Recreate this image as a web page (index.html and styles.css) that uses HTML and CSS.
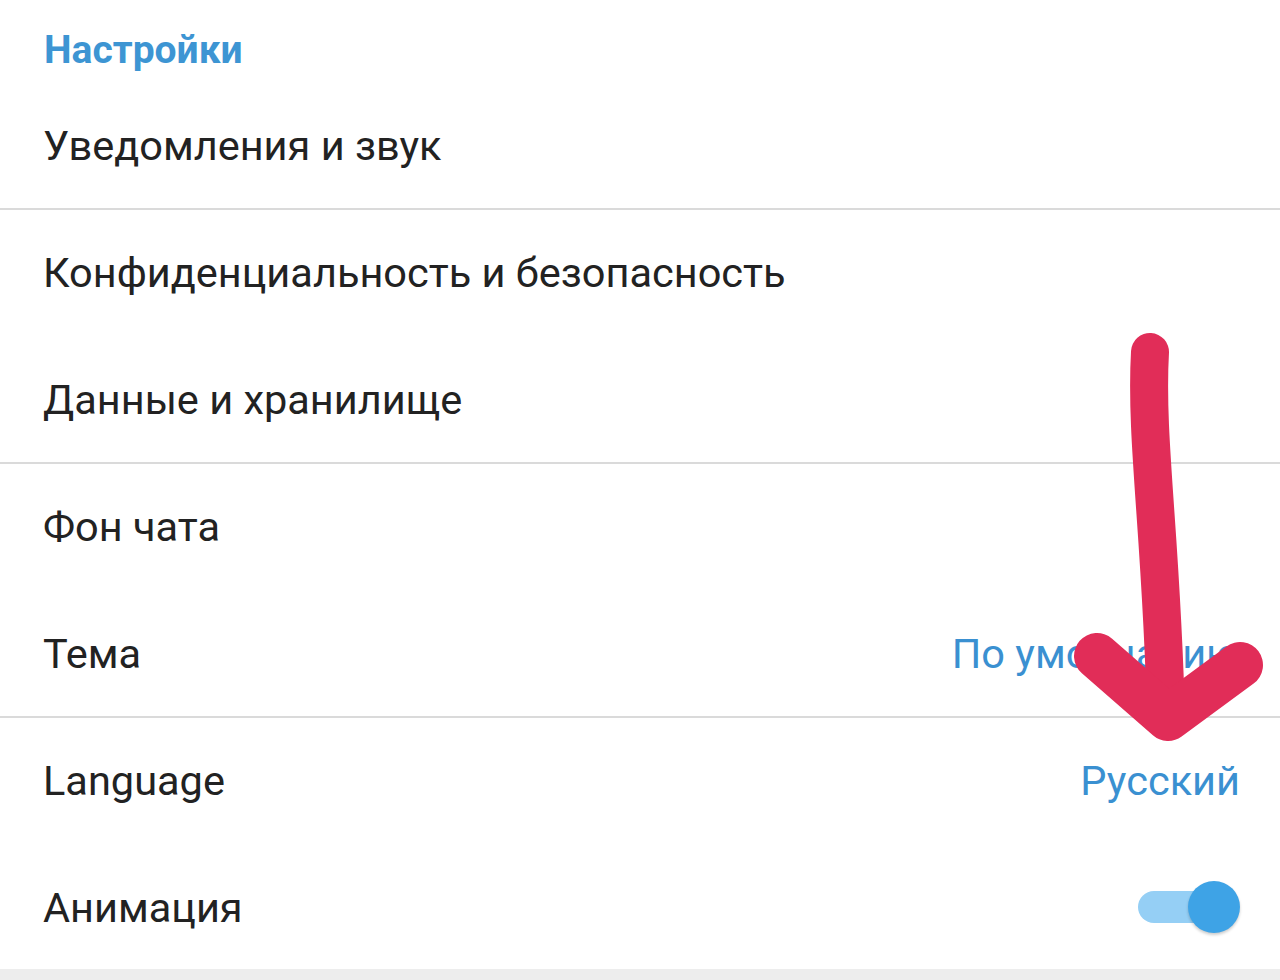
FILE: index.html
```html
<!DOCTYPE html>
<html lang="ru">
<head>
  <meta charset="UTF-8" />
  <meta name="viewport" content="width=device-width, initial-scale=1.0" />
  <title>Настройки</title>
  <link rel="stylesheet" href="styles.css">
</head>
<body>
  <div class="settings">
    <div class="section-title">Настройки</div>
    <div class="row sep">
      <span class="label">Уведомления и звук</span>
    </div>
    <div class="row">
      <span class="label">Конфиденциальность и безопасность</span>
    </div>
    <div class="row sep">
      <span class="label">Данные и хранилище</span>
    </div>
    <div class="row">
      <span class="label">Фон чата</span>
    </div>
    <div class="row sep">
      <span class="label">Тема</span>
      <span class="value">По умолчанию</span>
    </div>
    <div class="row">
      <span class="label">Language</span>
      <span class="value">Русский</span>
    </div>
    <div class="row sep">
      <span class="label">Анимация</span>
      <span class="switch"><span class="knob"></span></span>
    </div>
  </div>
  <div class="footer"></div>

  <!-- стрелка поверх -->
  <svg class="arrow" width="1280" height="980" viewBox="0 0 1280 980">
    <path class="stem" d="M1150 352 C1145 440 1162 540 1166 720" />
    <path class="head" d="M1097 656 L1168 718 L1240 665" />
  </svg>
</body>
</html>
```

FILE: styles.css
```css
body {
  margin: 0;
  background: #fff;
  font-family: Roboto, "Noto Sans", sans-serif;
  color: #222;
  width: 1280px;
  height: 980px;
  overflow: hidden;
}
.settings {
  background: #fff;
}
.section-title {
  height: 83px;
  padding: 16px 0 0 44px;
  display: flex;
  align-items: center;
  box-sizing: border-box;
  font-size: 39px;
  font-weight: 700;
  color: #3d95d3;
}
.row {
  height: 127px;
  box-sizing: border-box;
  display: flex;
  align-items: center;
  justify-content: space-between;
  padding: 0 40px 3px 43px;
  font-size: 41.5px;
}
.row.sep {
  border-bottom: 2px solid #dadada;
  padding-bottom: 1px;
}
.value {
  color: #3a90d1;
}
.switch {
  position: relative;
  width: 98px;
  height: 32px;
  border-radius: 16px;
  background: #95cff5;
  margin-right: 4px;
}
.knob {
  position: absolute;
  right: -4px;
  top: -10px;
  width: 52px;
  height: 52px;
  border-radius: 50%;
  background: #3ea3e6;
  box-shadow: 0 2px 3px rgba(0,0,0,0.2);
}
.footer {
  height: 20px;
  margin-top: -3px;
  background: #ededed;
}
.arrow {
  position: absolute;
  left: 0;
  top: 0;
  fill: none;
  stroke: #e12d58;
  stroke-linecap: round;
  stroke-linejoin: round;
}
.stem {
  stroke-width: 38;
}
.head {
  stroke-width: 46;
}
```
